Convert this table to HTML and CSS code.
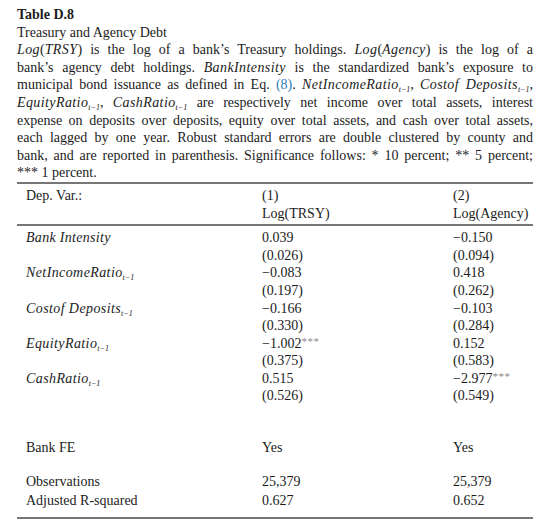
FILE: index.html
```html
<!DOCTYPE html>
<html lang="en">
<head>
  <meta charset="UTF-8">
  <title>Table D.8</title>
  <link rel="stylesheet" href="styles.css">
</head>
<body>
  <div class="page">
    <div class="caption">
      <div class="title">Table D.8</div>
      <div>Treasury and Agency Debt</div>
      <div class="notes">
        <span class="line"><span class="m">Log</span>(<span class="m">TRSY</span>) is the log of a bank’s Treasury holdings. <span class="m">Log</span>(<span class="m">Agency</span>) is the log of a</span>
        <span class="line">bank’s agency debt holdings. <span class="m">BankIntensity</span> is the standardized bank’s exposure to</span>
        <span class="line">municipal bond issuance as defined in Eq. <a class="ref">(8)</a>. <span class="m">NetIncomeRatio<sub>t−1</sub></span>, <span class="m">Costof Deposits<sub>t−1</sub></span>,</span>
        <span class="line"><span class="m">EquityRatio<sub>t−1</sub></span>, <span class="m">CashRatio<sub>t−1</sub></span> are respectively net income over total assets, interest</span>
        <span class="line">expense on deposits over deposits, equity over total assets, and cash over total assets,</span>
        <span class="line">each lagged by one year. Robust standard errors are double clustered by county and</span>
        <span class="line">bank, and are reported in parenthesis. Significance follows: * 10 percent; ** 5 percent;</span>
        <span class="line last">*** 1 percent.</span>
      </div>
    </div>

    <table class="results">
      <thead>
        <tr><td>Dep. Var.:</td><td>(1)</td><td>(2)</td></tr>
        <tr><td></td><td>Log(TRSY)</td><td>Log(Agency)</td></tr>
      </thead>
      <tbody>
        <tr class="first"><td><i class="wide">Bank Intensity</i></td><td>0.039</td><td>−0.150</td></tr>
        <tr><td></td><td>(0.026)</td><td>(0.094)</td></tr>
        <tr><td><span class="m">NetIncomeRatio<sub>t−1</sub></span></td><td>−0.083</td><td>0.418</td></tr>
        <tr><td></td><td>(0.197)</td><td>(0.262)</td></tr>
        <tr><td><span class="m">Costof Deposits<sub>t−1</sub></span></td><td>−0.166</td><td>−0.103</td></tr>
        <tr><td></td><td>(0.330)</td><td>(0.284)</td></tr>
        <tr><td><span class="m">EquityRatio<sub>t−1</sub></span></td><td>−1.002<span class="stars">***</span></td><td>0.152</td></tr>
        <tr><td></td><td>(0.375)</td><td>(0.583)</td></tr>
        <tr><td><span class="m">CashRatio<sub>t−1</sub></span></td><td>0.515</td><td>−2.977<span class="stars">***</span></td></tr>
        <tr><td></td><td>(0.526)</td><td>(0.549)</td></tr>
        <tr class="fe"><td>Bank FE</td><td>Yes</td><td>Yes</td></tr>
        <tr class="obs"><td>Observations</td><td>25,379</td><td>25,379</td></tr>
        <tr class="last"><td>Adjusted R-squared</td><td>0.627</td><td>0.652</td></tr>
      </tbody>
    </table>
  </div>
</body>
</html>
```

FILE: styles.css
```css
body {
  margin: 0;
  background: #fff;
  color: #1c1c1c;
  font-family: "Liberation Serif", "Times New Roman", serif;
  font-size: 14px;
}
.page {
  width: 516px;
  padding: 6px 0 0 17px;
}
.caption {
  line-height: 17.6px;
}
.title {
  font-weight: bold;
}
.notes .line {
  display: block;
  height: 17.6px;
  white-space: nowrap;
  text-align: justify;
  text-align-last: justify;
}
.notes .line.last {
  text-align-last: left;
}
.m {
  font-style: italic;
  letter-spacing: 0.4px;
}
.wide {
  letter-spacing: 0.3px;
}
sub {
  font-size: 8px;
  font-style: italic;
  letter-spacing: 0;
  vertical-align: -3px;
  line-height: 0;
}
.ref {
  color: #2f7fb8;
  text-decoration: none;
}
.results {
  width: 516px;
  margin-top: 0;
  border-collapse: collapse;
  border-top: 2px solid #777;
  border-bottom: 2px solid #777;
}
.results td {
  padding: 0;
  height: 17.6px;
  line-height: 17.6px;
  vertical-align: middle;
  white-space: nowrap;
}
.results td:first-child {
  width: 236px;
  padding-left: 9px;
}
.results td:nth-child(2) {
  width: 191px;
}
.results thead tr:first-child td {
  padding-top: 3px;
}
.results thead tr:last-child td {
  padding-bottom: 2px;
  border-bottom: 2px solid #777;
}
.results tr.first td {
  padding-top: 3px;
}
.results tr.fe td {
  padding-top: 34px;
}
.results tr.obs td {
  padding-top: 16px;
}
.results tr.last td {
  padding-top: 2px;
  padding-bottom: 7px;
}
.stars {
  color: #8a8a8a;
  font-size: 11px;
  letter-spacing: 0.5px;
  vertical-align: 3px;
  line-height: 0;
}
```
